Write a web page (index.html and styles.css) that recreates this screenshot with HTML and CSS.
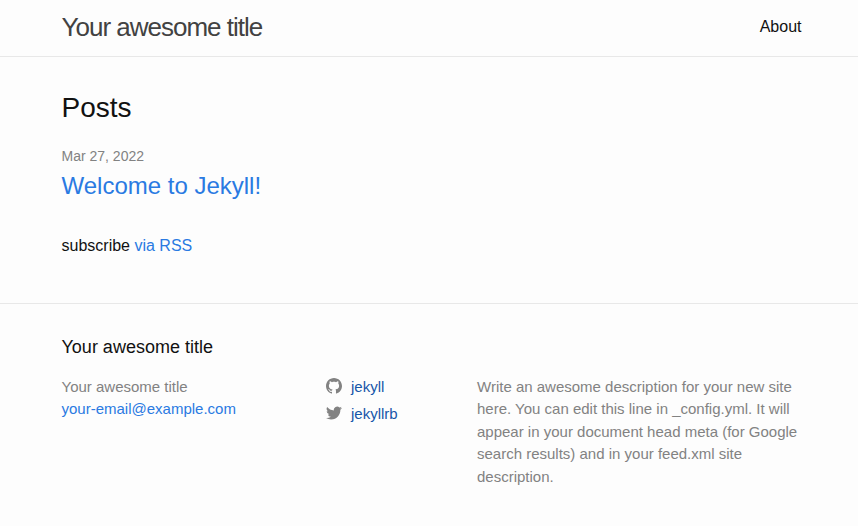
FILE: index.html
```html
<!DOCTYPE html>
<html lang="en">
<head>
<meta charset="utf-8">
<title>Your awesome title</title>
<link rel="stylesheet" href="styles.css">
</head>
<body>
<header class="site-header">
  <div class="wrapper header-row">
    <a class="site-title" href="#">Your awesome title</a>
    <nav class="site-nav"><a class="page-link" href="#">About</a></nav>
  </div>
</header>
<main class="page-content">
  <div class="wrapper">
    <h2 class="post-list-heading">Posts</h2>
    <ul class="post-list">
      <li>
        <span class="post-meta">Mar 27, 2022</span>
        <h3><a class="post-link" href="#">Welcome to Jekyll!</a></h3>
      </li>
    </ul>
    <p class="rss-subscribe">subscribe <a href="#">via RSS</a></p>
  </div>
</main>
<footer class="site-footer">
  <div class="wrapper">
    <h2 class="footer-heading">Your awesome title</h2>
    <div class="footer-cols">
      <ul class="contact-list">
        <li>Your awesome title</li>
        <li><a href="#">your-email@example.com</a></li>
      </ul>
      <ul class="social-list">
        <li><a href="#"><svg class="svg-icon" viewBox="0 0 16 16"><path fill-rule="evenodd" d="M8 0C3.58 0 0 3.582 0 8c0 3.535 2.292 6.533 5.47 7.59.4.075.547-.172.547-.385 0-.19-.007-.693-.01-1.36-2.226.483-2.695-1.073-2.695-1.073-.364-.924-.89-1.17-.89-1.17-.725-.496.056-.486.056-.486.803.056 1.225.824 1.225.824.714 1.223 1.873.87 2.33.665.072-.517.278-.87.507-1.07-1.777-.2-3.644-.888-3.644-3.953 0-.873.31-1.587.823-2.147-.083-.202-.358-1.015.077-2.117 0 0 .672-.215 2.2.82.638-.178 1.323-.266 2.003-.27.68.004 1.364.092 2.003.27 1.527-1.035 2.198-.82 2.198-.82.437 1.102.163 1.915.08 2.117.513.56.823 1.274.823 2.147 0 3.073-1.87 3.75-3.653 3.947.287.246.543.735.543 1.48 0 1.07-.01 1.933-.01 2.195 0 .215.144.463.55.385C13.71 14.53 16 11.534 16 8c0-4.418-3.582-8-8-8"/></svg><span class="username">jekyll</span></a></li>
        <li><a href="#"><svg class="svg-icon" viewBox="0 0 16 16"><path d="M15.969 3.058c-.586.26-1.217.436-1.878.515.675-.405 1.194-1.045 1.438-1.809-.632.375-1.332.647-2.076.793A3.267 3.267 0 0 0 7.888 5.535C5.17 5.398 2.763 4.098 1.15 2.12A3.265 3.265 0 0 0 2.162 6.482a3.256 3.256 0 0 1-1.479-.409v.041a3.27 3.27 0 0 0 2.622 3.205 3.283 3.283 0 0 1-1.476.056 3.272 3.272 0 0 0 3.052 2.27A6.559 6.559 0 0 1 .045 12.998a9.236 9.236 0 0 0 5.006 1.468c6.009 0 9.294-4.978 9.294-9.294 0-.142-.003-.283-.009-.423a6.638 6.638 0 0 0 1.633-1.691"/></svg><span class="username">jekyllrb</span></a></li>
      </ul>
      <p class="description">Write an awesome description for your new site here. You can edit this line in _config.yml. It will appear in your document head meta (for Google search results) and in your feed.xml site description.</p>
    </div>
  </div>
</footer>
</body>
</html>
```
FILE: styles.css
```css
* { box-sizing: border-box; }
body, h2, h3, p, ul { margin: 0; padding: 0; }
html { overflow: hidden; }
body {
  font: 400 16px/1.5 "Liberation Sans", Arial, sans-serif;
  color: #111;
  background: #fdfdfd;
  min-height: 526px;
}
ul { list-style: none; }
h2, h3 { font-weight: 400; }
a { color: #2a7ae2; text-decoration: none; }
.wrapper { width: 800px; margin: 0 auto; padding: 0 27.5px 0 32.5px; }
.site-header { height: 57px; border-bottom: 1px solid #e8e8e8; }
.header-row { display: flex; justify-content: space-between; }
.site-title { font-size: 26px; line-height: 54px; letter-spacing: -1px; color: #424242; }
.site-nav { line-height: 54px; }
.page-link { color: #111; }
.page-content { height: 246px; padding-top: 30px; }
.post-list-heading { font-size: 28px; line-height: 42px; margin-bottom: 15px; }
.post-meta { display: block; font-size: 14px; line-height: 24px; color: #828282; }
.post-link { display: block; font-size: 24px; line-height: 36px; }
.rss-subscribe { margin-top: 30px; }
.site-footer { border-top: 1px solid #e8e8e8; padding: 30px 0; }
.footer-heading { font-size: 18px; line-height: 27px; margin-bottom: 14.75px; }
.footer-cols { display: flex; font-size: 15px; line-height: 22.5px; color: #828282; }
.contact-list { width: 264.5px; }
.social-list { width: 151px; }
.social-list li { height: 27px; }
.social-list a { display: flex; align-items: center; height: 22.5px; color: #1756a9; }
.svg-icon { width: 16px; height: 16px; fill: #828282; margin: 0 9px 2px 0; }
.description { flex: 1; }
```
